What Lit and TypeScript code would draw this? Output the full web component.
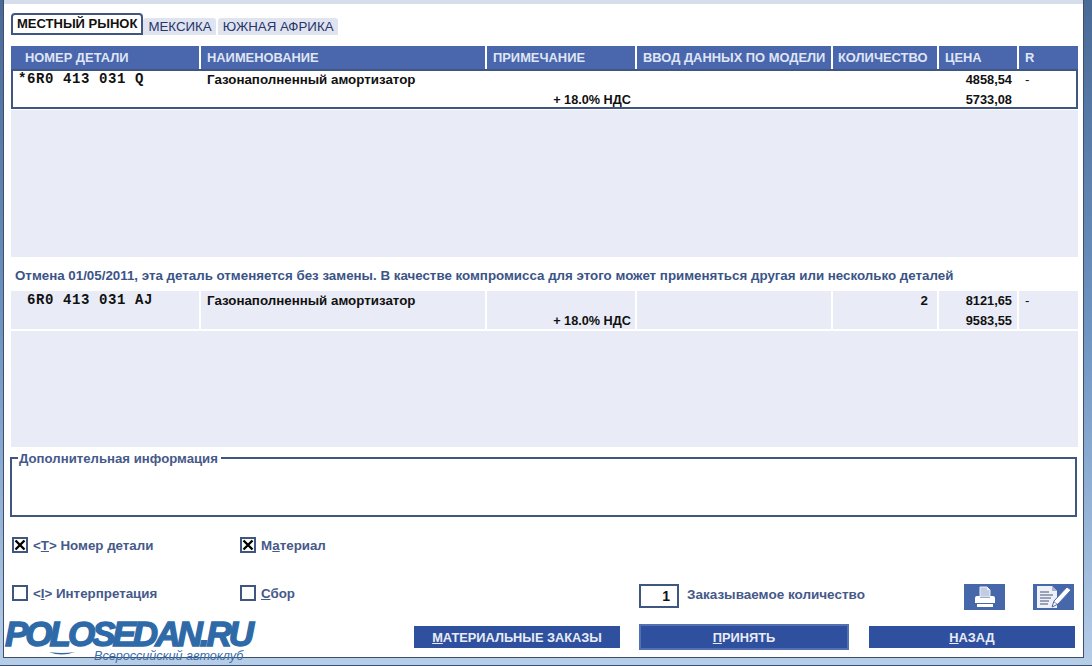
import { LitElement, html, css, svg } from 'lit';
import { customElement } from 'lit/decorators.js';

const COLUMNS = ['НОМЕР ДЕТАЛИ', 'НАИМЕНОВАНИЕ', 'ПРИМЕЧАНИЕ', 'ВВОД ДАННЫХ ПО МОДЕЛИ', 'КОЛИЧЕСТВО', 'ЦЕНА', 'R'];

const printerIcon = svg`
  <path d="M16 3h7l3 3v7H16z" fill="#c4cce2" stroke="#eef1f8" stroke-width="1" />
  <path d="M23 3v3h3" fill="#eef1f8" />
  <path d="M13 12h3v2h10v-2h3q2 0 2 2v5H11v-5q0-2 2-2z" fill="#fff" />
  <rect x="13" y="20" width="16" height="3" fill="#fff" />
`;

const editIcon = svg`
  <path d="M4 2h15l5 5v17H4z" fill="#eef1f6" />
  <path d="M19 2v5h5" fill="#aab4d2" />
  <path d="M7 8h9M7 11h13M7 14h11M7 17h9M7 20h8" stroke="#7d88a6" stroke-width="1.4" />
  <path d="M34 3l4 3-13 14-6 3 2-6z" fill="#fff" stroke="#4668ab" stroke-width="1" />
  <path d="M21 18l3 2" stroke="#8a94b2" stroke-width="1" />
`;

@customElement('app-root')
export class AppRoot extends LitElement {
  private renderRow(part: string, qty: string, price: string, total: string, selected: boolean) {
    return html`
      <div class="row ${selected ? 'selected' : 'plain'}">
        <div class="cell part">${part}</div>
        <div class="cell name">Газонаполненный амортизатор</div>
        <div class="cell note">+ 18.0% НДС</div>
        <div class="cell"></div>
        <div class="cell qty">${qty}</div>
        <div class="cell price"><span>${price}</span><span>${total}</span></div>
        <div class="cell flag">-</div>
      </div>
    `;
  }

  private renderCheck(checked: boolean, label: unknown) {
    return html`
      <div class="option">
        <span class="box">
          ${checked ? html`<svg width="12" height="12" viewBox="0 0 12 12"><path d="M1.5 1.5l9 9M10.5 1.5l-9 9" stroke="#000" stroke-width="2.4" /></svg>` : ''}
        </span>
        <span>${label}</span>
      </div>
    `;
  }

  override render() {
    return html`
      <div class="window">
        <div class="tabs">
          <div class="tab active">МЕСТНЫЙ РЫНОК</div>
          <div class="tab">МЕКСИКА</div>
          <div class="tab">ЮЖНАЯ АФРИКА</div>
        </div>

        <div class="head">
          ${COLUMNS.map((c) => html`<div class="col">${c}</div>`)}
        </div>
        ${this.renderRow('*6R0 413 031 Q', '', '4858,54', '5733,08', true)}
        <div class="pane first"></div>

        <div class="notice">Отмена 01/05/2011, эта деталь отменяется без замены. В качестве компромисса для этого может применяться другая или несколько деталей</div>
        ${this.renderRow(' 6R0 413 031 AJ', '2', '8121,65', '9583,55', false)}
        <div class="pane second"></div>

        <fieldset class="info">
          <legend>Дополнительная информация</legend>
        </fieldset>

        <div class="options top">
          ${this.renderCheck(true, html`&lt;<u>T</u>&gt; Номер детали`)}
          ${this.renderCheck(true, html`М<u>а</u>териал`)}
        </div>

        <div class="options middle">
          ${this.renderCheck(false, html`&lt;<u>I</u>&gt; Интерпретация`)}
          ${this.renderCheck(false, html`<u>С</u>бор`)}
          <div class="order">
            <div class="count">1</div>
            <span>Заказываемое количество</span>
          </div>
          <div class="tools">
            <div class="tool"><svg width="41" height="26" viewBox="0 0 41 26">${printerIcon}</svg></div>
            <div class="tool"><svg width="41" height="26" viewBox="0 0 41 26">${editIcon}</svg></div>
          </div>
        </div>

        <div class="actions">
          <div class="btn materials"><u>М</u>АТЕРИАЛЬНЫЕ ЗАКАЗЫ</div>
          <div class="btn accept"><u>П</u>РИНЯТЬ</div>
          <div class="btn back"><u>Н</u>АЗАД</div>
        </div>

        <div class="logo">
          <div class="logo-name">POLOSEDAN.RU</div>
          <svg class="swoosh" width="26" height="5" viewBox="0 0 26 5"><path d="M0 1q12 5 26 0q-13 2-26 0z" fill="#2f6aa8" /></svg>
          <div class="logo-sub">Всероссийский автоклуб</div>
        </div>
      </div>
    `;
  }

  static override styles = css`
    :host {
      display: block;
      width: 1092px;
      height: 666px;
      overflow: hidden;
      font-family: 'Liberation Sans', Arial, sans-serif;
      background: linear-gradient(#4a6a96, #6f95c2 50%, #b6cde8);
    }
    :host::after {
      content: '';
      display: block;
      box-sizing: border-box;
      height: 8px;
      margin-top: 1px;
      background: #b6cde8;
      border-bottom: 1px solid #3d4f6a;
    }
    .window {
      position: relative;
      box-sizing: border-box;
      width: 1079px;
      height: 657px;
      margin-left: 4px;
      border-top: 4px solid #d6deec;
      padding: 9px 0 0 7px;
      background: #fff;
      box-shadow: 0 0 0 1px #3d4f6a;
    }

    .tabs {
      display: flex;
      align-items: flex-end;
      height: 22px;
    }
    .tab {
      height: 17px;
      margin-right: 2px;
      padding: 0 4px 0 5px;
      background: #e0e4f0;
      border-radius: 3px 3px 0 0;
      color: #26356a;
      font-size: 13.3px;
      line-height: 18px;
    }
    .tab.active {
      box-sizing: border-box;
      height: 22px;
      margin-right: 0;
      padding: 0 4px;
      background: #fff;
      border: 2px solid #3f5680;
      border-radius: 4px 4px 0 0;
      color: #111;
      font-size: 13px;
      font-weight: bold;
      line-height: 17px;
    }

    .head {
      display: grid;
      grid-template-columns: 188px 284px 148px 194px 104px 78px 59px;
      gap: 2px;
      width: 1067px;
      height: 22px;
      margin-top: 11px;
    }
    .col {
      padding-left: 6px;
      background: #4a66ad;
      color: #dfe5f4;
      font-size: 12.9px;
      font-weight: bold;
      line-height: 23px;
      white-space: nowrap;
    }
    .col:first-child {
      padding-left: 14px;
    }
    .col:nth-child(5) {
      padding-left: 5px;
    }

    .row {
      box-sizing: border-box;
      display: grid;
      width: 1067px;
      color: #111;
      font-size: 13.33px;
      font-weight: bold;
      line-height: 20px;
    }
    .row.selected {
      grid-template-columns: 188px 286px 150px 196px 106px 80px 57px;
      grid-template-rows: 36px;
      height: 40px;
      margin-top: 1px;
      border: 2px solid #3f5680;
    }
    .row.plain {
      grid-template-columns: 188px 284px 148px 194px 104px 78px 59px;
      grid-template-rows: 38px;
      gap: 2px;
      height: 38px;
    }
    .row.plain .cell {
      background: #e9ecf6;
    }
    .cell {
      display: flex;
      flex-direction: column;
      min-width: 0;
      white-space: nowrap;
    }
    .row.selected .cell {
      height: 40px;
      margin-top: -1px;
    }
    .part {
      padding: 2px 0 0 7px;
      font-family: 'Liberation Mono', 'Courier New', monospace;
      font-size: 14px;
      letter-spacing: 0.6px;
      line-height: 15px;
      white-space: pre;
    }
    .row.selected .part {
      padding-left: 5px;
    }
    .name {
      padding-left: 6px;
    }
    .note {
      align-items: flex-end;
      padding: 20px 4px 0 0;
      font-size: 12.7px;
    }
    .row.selected .note {
      padding-right: 6px;
    }
    .qty {
      align-items: flex-end;
      padding-right: 9px;
    }
    .price {
      align-items: flex-end;
      padding-right: 5px;
      font-size: 12.8px;
    }
    .row.selected .price {
      padding-right: 7px;
    }
    .flag {
      padding-left: 6px;
      font-weight: normal;
    }

    .pane {
      width: 1067px;
      background: #e9ecf6;
    }
    .pane.first {
      height: 147px;
      margin-top: 1px;
    }
    .pane.second {
      height: 116px;
      margin-top: 2px;
    }
    .notice {
      height: 34px;
      padding-left: 4px;
      color: #3b5488;
      font-size: 13.33px;
      font-weight: bold;
      line-height: 37px;
      white-space: nowrap;
    }

    .info {
      box-sizing: border-box;
      width: 1067px;
      height: 68px;
      margin: 2px 0 0 -1px;
      padding: 0;
      border: 2px solid #3f5680;
    }
    .info legend {
      margin-left: 6px;
      padding: 2px 3px 0 1px;
      color: #45598a;
      font-size: 13.2px;
      font-weight: bold;
      line-height: 15px;
    }

    .options {
      display: grid;
      grid-template-columns: 228px 399px auto 1fr;
      width: 1062px;
      margin-left: 1px;
      color: #45598a;
      font-size: 13.33px;
      font-weight: bold;
    }
    .options.top {
      height: 16px;
      margin-top: 20px;
    }
    .options.middle {
      height: 26px;
      margin-top: 31px;
    }
    .option {
      display: flex;
      gap: 5px;
      height: 16px;
      line-height: 17px;
    }
    .middle .option {
      margin-top: 1px;
    }
    .box {
      box-sizing: border-box;
      display: flex;
      align-items: center;
      justify-content: center;
      width: 16px;
      height: 16px;
      border: 2px solid #3f5680;
      background: #fff;
    }
    .order {
      display: flex;
      gap: 8px;
      font-size: 13.5px;
      line-height: 21px;
    }
    .count {
      box-sizing: border-box;
      width: 40px;
      height: 24px;
      padding-right: 7px;
      border: 2px solid #3f5680;
      color: #111;
      font-size: 14px;
      line-height: 21px;
      text-align: right;
    }
    .tools {
      display: flex;
      justify-content: flex-end;
      gap: 28px;
    }
    .tool {
      width: 41px;
      height: 26px;
      background: #4668ab;
    }
    .tool svg {
      display: block;
    }

    .actions {
      display: flex;
      align-items: center;
      height: 26px;
      margin-top: 14px;
      margin-left: 403px;
    }
    .btn {
      box-sizing: border-box;
      height: 22px;
      background: #2f4f9f;
      color: #e8ecf6;
      font-size: 12.8px;
      font-weight: bold;
      line-height: 23px;
      text-align: center;
    }
    .materials {
      width: 206px;
    }
    .accept {
      width: 210px;
      height: 26px;
      margin-left: 19px;
      border: 2px solid #5470b0;
    }
    .back {
      width: 206px;
      margin-left: 20px;
    }

    .logo {
      position: absolute;
      left: 1px;
      top: 612px;
      width: 260px;
      height: 48px;
    }
    .logo-name {
      margin-top: 3px;
      color: #2f6aa8;
      font-size: 35px;
      font-style: italic;
      font-weight: bold;
      letter-spacing: -3px;
      line-height: 30px;
      -webkit-text-stroke: 1.4px #2f6aa8;
      white-space: nowrap;
    }
    .swoosh {
      position: absolute;
      left: 44px;
      top: 35px;
    }
    .logo-sub {
      position: absolute;
      left: 89px;
      top: 33px;
      color: #3d6ea8;
      font-size: 12.6px;
      font-style: italic;
      line-height: 14px;
      white-space: nowrap;
    }
  `;
}

declare global {
  interface HTMLElementTagNameMap {
    'app-root': AppRoot;
  }
}
